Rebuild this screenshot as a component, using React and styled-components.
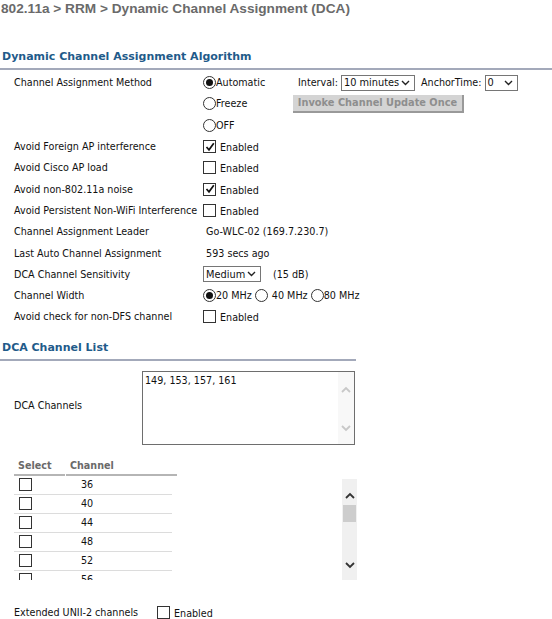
import React from 'react';
import styled, {createGlobalStyle} from 'styled-components';

const GlobalStyle = createGlobalStyle`
    body {
        margin: 0;
        background: #fff;
        font-family: "DejaVu Sans", Verdana, sans-serif;
        font-size: 9.6px;
        color: #111;
    }
`;

const Page = styled.div`
    width: 552px;
    height: 619px;
    overflow: hidden;
`;

const Title = styled.h1`
    margin: 0;
    font-family: "Liberation Sans", Arial, sans-serif;
    font-size: 13.65px;
    line-height: 18px;
    font-weight: bold;
    color: #6a6a6a;
    padding-left: 1px;
`;

const SectionHeader = styled.h2`
    margin: ${p => p.$top}px 0 0 0;
    width: ${p => p.$width};
    font-size: 11px;
    line-height: 16px;
    font-weight: bold;
    color: #1f5b8a;
    padding: 0 0 3px 2px;
    border-bottom: 2px solid #a3a9ba;
    box-sizing: border-box;
`;

const Form = styled.div`
    margin-top: 2px;
    padding-left: 14px;
    display: grid;
    grid-template-columns: 189px 1fr;
    grid-auto-rows: 21.3px;
    align-items: center;
`;

const Label = styled.div`
    white-space: nowrap;
`;

const Value = styled.div`
    display: flex;
    align-items: center;
    white-space: nowrap;
    gap: ${p => p.$gap || 0}px;
`;

const MethodCell = styled.div`
    grid-row: span 3;
    display: grid;
    grid-template-columns: 90px 1fr;
    grid-auto-rows: 21.3px;
    align-items: center;
    align-self: stretch;
`;

const RadioBox = styled.span`
    width: 11px;
    height: 11px;
    border: 1px solid #333;
    border-radius: 50%;
    display: inline-flex;
    align-items: center;
    justify-content: center;
    box-sizing: content-box;
    background: #fff;
    margin-right: ${p => p.$space || 0}px;
    &::after {
        content: '';
        width: 7px;
        height: 7px;
        border-radius: 50%;
        background: ${p => (p.$on ? '#111' : 'transparent')};
    }
`;

const Radio = ({on, children, space}) => (
    <Value>
        <RadioBox $on={on} $space={space} />
        {children}
    </Value>
);

const Box = styled.span`
    width: 11px;
    height: 11px;
    border: 1px solid #333;
    display: inline-flex;
    align-items: center;
    justify-content: center;
    background: #fff;
    box-sizing: content-box;
    flex: none;
`;

const CheckText = styled.span`
    margin-left: 4px;
    padding-top: 2px;
`;

const Check = ({on, text = 'Enabled'}) => (
    <Value>
        <Box>
            {on && (
                <svg width="10" height="10" viewBox="0 0 10 10">
                    <path d="M1.5 5 L4 7.8 L8.8 1.2" fill="none" stroke="#111" strokeWidth="1.7" />
                </svg>
            )}
        </Box>
        {text && <CheckText>{text}</CheckText>}
    </Value>
);

const Chevron = () => (
    <svg width="9" height="6" viewBox="0 0 9 6">
        <path d="M1 1 L4.5 4.5 L8 1" fill="none" stroke="#222" strokeWidth="1.4" />
    </svg>
);

const SelectBox = styled.span`
    width: ${p => p.$w}px;
    height: 16px;
    border: 1px solid #767676;
    box-sizing: border-box;
    display: inline-flex;
    align-items: center;
    justify-content: space-between;
    padding: 0 4px 0 2px;
    font-size: 9.8px;
    background: #fff;
`;

const Select = ({w, children}) => (
    <SelectBox $w={w}>
        <span>{children}</span>
        <Chevron />
    </SelectBox>
);

const Controls = styled.div`
    display: flex;
    align-items: center;
    gap: 3px;
    margin-left: 5px;
    white-space: nowrap;
`;

const Spacer = styled.span`
    width: ${p => p.$w}px;
`;

const Button = styled.button`
    width: 171px;
    height: 18px;
    padding: 0;
    margin: 0;
    font-family: "DejaVu Sans", Verdana, sans-serif;
    font-size: 9.8px;
    font-weight: bold;
    color: #8e8e8e;
    background: #d4d4d4;
    border: none;
    border-right: 2px solid #999;
    border-bottom: 2px solid #999;
    justify-self: start;
`;

const ChannelArea = styled.div`
    margin-top: 10px;
    padding-left: 14px;
    display: flex;
    align-items: center;
`;

const AreaLabel = styled.div`
    width: 128px;
    padding-bottom: 4px;
`;

const TextArea = styled.div`
    width: 213px;
    height: 74px;
    border: 1px solid #6e6e6e;
    box-sizing: border-box;
    display: flex;
    justify-content: space-between;
`;

const AreaText = styled.div`
    padding: 3px 2px;
`;

const FaintBar = styled.div`
    width: 16px;
    background: #f8f8f8;
    display: flex;
    flex-direction: column;
    justify-content: space-between;
    align-items: center;
    padding: 14px 0 12px;
`;

const Arrow = ({up, color}) => (
    <svg width="10" height="7" viewBox="0 0 10 7">
        <path d={up ? 'M1 6 L5 2 L9 6' : 'M1 1 L5 5 L9 1'} fill="none" stroke={color} strokeWidth="1.8" />
    </svg>
);

const ListWrap = styled.div`
    margin-top: 12px;
    padding-left: 14px;
    width: 343px;
    display: flex;
    justify-content: space-between;
    align-items: flex-end;
`;

const Table = styled.div`
    width: 162px;
`;

const HeadRow = styled.div`
    display: grid;
    grid-template-columns: 51px 111px;
    column-gap: 1px;
    height: 19px;
`;

const HeadCell = styled.div`
    font-weight: bold;
    color: #6a6a6a;
    padding-left: ${p => p.$pad}px;
    border-bottom: 2px solid #b5b5b5;
    line-height: 17px;
`;

const Body = styled.div`
    height: 104px;
    overflow: hidden;
`;

const Row = styled.div`
    display: grid;
    grid-template-columns: 67px 1fr;
    height: 18px;
    align-items: center;
    border-bottom: 1px solid #dcdcdc;
    width: 158px;
`;

const BoxCell = styled.div`
    padding-left: 5px;
    display: flex;
`;

const Scroll = styled.div`
    width: 15px;
    height: 101px;
    background: #f0f0f0;
    display: flex;
    flex-direction: column;
    align-items: center;
    padding-top: 13px;
    box-sizing: border-box;
`;

const Thumb = styled.div`
    width: 13px;
    height: 17px;
    background: #cdcdcd;
    margin: 6px 0 auto;
`;

const BottomArrow = styled.div`
    margin-bottom: 9px;
`;

const Extended = styled.div`
    margin-top: 26px;
    padding-left: 14px;
    display: flex;
    align-items: center;
`;

const ExtLabel = styled.div`
    width: 143px;
`;

const channels = [36, 40, 44, 48, 52, 56];

export default function App() {
    return (
        <Page>
            <GlobalStyle />
            <Title>802.11a &gt; RRM &gt; Dynamic Channel Assignment (DCA)</Title>

            <SectionHeader $top={31} $width="552px">Dynamic Channel Assignment Algorithm</SectionHeader>
            <Form>
                <Label>Channel Assignment Method</Label>
                <MethodCell>
                    <Radio on>Automatic</Radio>
                    <Controls>
                        Interval:
                        <Select w={74}>10 minutes</Select>
                        <Spacer $w={0} />
                        AnchorTime:
                        <Select w={33}>0</Select>
                    </Controls>
                    <Radio>Freeze</Radio>
                    <Button>Invoke Channel Update Once</Button>
                    <Radio>OFF</Radio>
                </MethodCell>
                <Label />
                <Label />

                <Label>Avoid Foreign AP interference</Label>
                <Check on />
                <Label>Avoid Cisco AP load</Label>
                <Check />
                <Label>Avoid non-802.11a noise</Label>
                <Check on />
                <Label>Avoid Persistent Non-WiFi Interference</Label>
                <Check />
                <Label>Channel Assignment Leader</Label>
                <Value>&nbsp;Go-WLC-02 (169.7.230.7)</Value>
                <Label>Last Auto Channel Assignment</Label>
                <Value>&nbsp;593 secs ago</Value>
                <Label>DCA Channel Sensitivity</Label>
                <Value $gap={12}>
                    <Select w={58}>Medium</Select>
                    (15 dB)
                </Value>
                <Label>Channel Width</Label>
                <Value>
                    <Radio on>20 MHz</Radio>
                    &nbsp;
                    <Radio space={4}>40 MHz</Radio>
                    &nbsp;
                    <Radio>80 MHz</Radio>
                </Value>
                <Label>Avoid check for non-DFS channel</Label>
                <Check />
            </Form>

            <SectionHeader $top={12} $width="356px">DCA Channel List</SectionHeader>
            <ChannelArea>
                <AreaLabel>DCA Channels</AreaLabel>
                <TextArea>
                    <AreaText>149, 153, 157, 161</AreaText>
                    <FaintBar>
                        <Arrow up color="#c8c8c8" />
                        <Arrow color="#c8c8c8" />
                    </FaintBar>
                </TextArea>
            </ChannelArea>

            <ListWrap>
                <Table>
                    <HeadRow>
                        <HeadCell $pad={4}>Select</HeadCell>
                        <HeadCell $pad={4}>Channel</HeadCell>
                    </HeadRow>
                    <Body>
                        {channels.map(c => (
                            <Row key={c}>
                                <BoxCell><Check text="" /></BoxCell>
                                <div>{c}</div>
                            </Row>
                        ))}
                    </Body>
                </Table>
                <Scroll>
                    <Arrow up color="#333" />
                    <Thumb />
                    <BottomArrow><Arrow color="#333" /></BottomArrow>
                </Scroll>
            </ListWrap>

            <Extended>
                <ExtLabel>Extended UNII-2 channels</ExtLabel>
                <Check />
            </Extended>
        </Page>
    );
}
